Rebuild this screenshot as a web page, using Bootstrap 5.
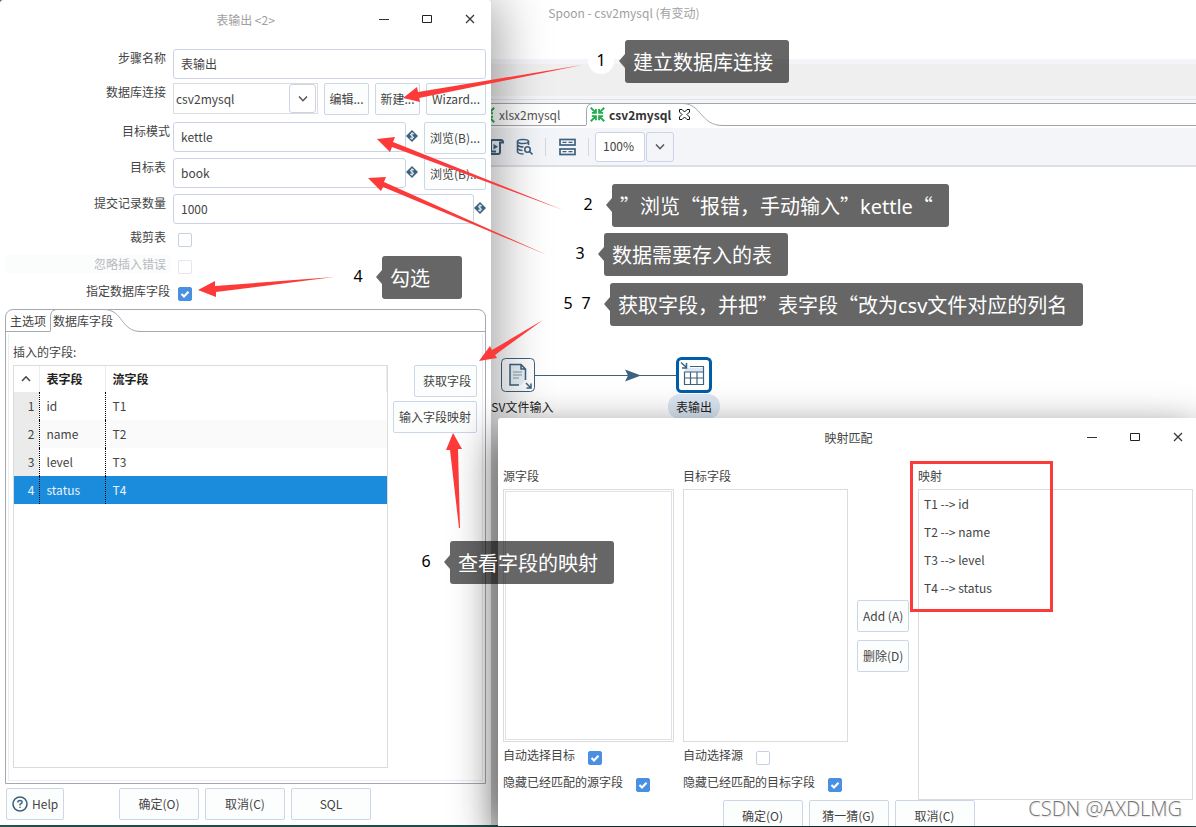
<!DOCTYPE html>
<html lang="zh-CN">
<head>
<meta charset="utf-8">
<meta name="viewport" content="width=device-width, initial-scale=1">
<title>Spoon - csv2mysql</title>
<link rel="stylesheet" href="https://cdn.jsdelivr.net/npm/bootstrap@5.3.0/dist/css/bootstrap.min.css">
<style>
  body { font-family: "Noto Sans CJK SC", sans-serif; font-size: 12px; line-height: 18px; color: #444; background: #2b5b58; }
  .desktop { height: 100vh; min-height: 820px; }
  .win { position: absolute; background: #fff; }
  .spoon { left: 52px; right: 0; top: 0; bottom: 2px; }
  .step-win { left: 0; top: 0; bottom: 2px; width: 491px; border-radius: 3px 3px 0 0; box-shadow: 8px 0 50px rgba(0,0,0,.36); }
  .map-win { left: 498px; right: -3px; top: 418px; bottom: 1px; border-radius: 3px 3px 0 0; box-shadow: 0 16px 44px rgba(0,0,0,.7); }

  /* title bars */
  .titlebar { height: 40px; }
  .win-btns { position: absolute; right: 0; top: 0; }
  .win-btn { width: 42px; height: 38px; border: 0; background: none; padding: 0; color: #333; }
  .win-btn svg { display: block; margin: 0 auto; }
  .muted-title { color: #a0a0a0; }

  /* form controls */
  .btn-k { height: 32px; padding: 0 5px; font-size: 12px; line-height: 18px; color: #444; background: #fcfefe; border: 1px solid #ccd6e9; border-radius: 2px; white-space: nowrap; }
  .btn-w { width: 80px; }
  .btn-n { width: 45px; padding: 0 4px; }
  .box { height: 30px; padding: 0 7px 2px; font-size: 12px; color: #444; border: 1px solid #ccd3e8; border-radius: 3px; min-width: 0; }
  .combo select { appearance: none; width: 100%; height: 31px; padding: 0 2px; border: 1px solid #dcdcdc; background: #fff; color: #444; line-height: 18px; }
  .combo span { position: absolute; right: 2px; top: 1px; width: 27px; height: 29px; border: 1px solid #ccd3e8; border-radius: 3px; background: #fff; pointer-events: none; }
  .chk { appearance: none; flex: none; width: 14px; height: 14px; margin: 0; border: 1px solid #c5d0e6; border-radius: 2px; background: #fff; }
  .chk:checked { border-color: #4a90e2; background: #4a90e2 url("data:image/svg+xml,%3Csvg xmlns='http://www.w3.org/2000/svg' viewBox='0 0 12 12'%3E%3Cpath d='M2.5 6l2.5 2.5 4.500-4.700' fill='none' stroke='%23fff' stroke-width='2.200'/%3E%3C/svg%3E") center / 12px 12px no-repeat; }
  .chk:disabled { border-color: #e3e5f0; }
  .form-line { display: grid; grid-template-columns: 165px 1fr; column-gap: 3px; align-items: start; }
  .form-line > label { text-align: right; }
  .line-field { height: 36px; }
  .line-check { height: 27px; }
  .line-check .chk { margin: 5px 0 0 5px; }
  .off { color: #b9b9c0; background: #fbfdfc; }
  .var-mark { flex: none; width: 12px; height: 12px; margin-top: 8px; }

  /* tab folder in the step dialog */
  .folder { margin: 0 5px; border: 1px solid #a3a8b3; border-radius: 8px 8px 0 0; min-height: 0; }
  .folder-tabs { height: 22px; border-bottom: 1px solid #a3a8b3; }
  .tab-k { position: relative; height: 22px; border: 0; background: none; padding: 0 3px; color: #444; }
  .tab-k svg { position: absolute; left: 0; top: -1px; }
  .tab-k span { position: relative; }
  .folder-body { margin: 2px; border: 1px solid #ececee; border-top: 0; padding: 9px 5px 12px 4px; min-height: 0; }
  .sheet { border: 1px solid #dcdcdc; }
  .fields { color: #444; table-layout: fixed; }
  .fields th, .fields td { height: 28px; padding: 0 7px; line-height: 18px; border: 0; vertical-align: middle; }
  .fields thead th { height: 26px; color: #222; border-right: 1px solid #ececec; background: #fff; }
  .fields thead svg { display: block; margin: 0 auto; }
  .fields tbody td:not(:last-child), .fields tbody th { border-right: 1px dotted #000; }
  .fields tbody th { background: #ebebeb; font-weight: 400; text-align: right; padding: 0 4px; color: #444; }
  .fields tbody tr:nth-child(2) td { background: #fafafa; }
  .fields tbody tr:nth-child(4) > * { background: #1b8cdb; color: #e8f3fb; }
  .foot { display: grid; grid-template-columns: 1fr auto 1fr; padding: 4px 7px 5px 6px; }

  /* main window */
  .spoon-title { height: 59px; padding-top: 4px; }
  .band { height: 45px; background: #efefef; border: solid #f4f5f8; border-width: 5px 0 8px; }
  .band-line { height: 1px; margin-top: -5px; margin-bottom: 3px; background: #dfe1e4; }
  .sheet-tabs { height: 23px; border-top: 1px solid #a5a5ac; border-bottom: 1px solid #a5a5ac; padding-left: 427px; }
  .sheet-tab { position: relative; height: 21px; border: 0; background: none; padding: 0; color: #555; }
  .sheet-tab.first { width: 107px; gap: 4px; }
  .sheet-tab.current { width: 134px; color: #333; }
  .sheet-tab .edge { position: absolute; left: 0; top: -1px; }
  .sheet-tab > *:not(.edge) { position: relative; }
  .tools { height: 39px; margin-top: 2px; padding-left: 435px; background: #f4f5f8; border-bottom: 2px solid #dcdee2; }
  .tool { border: 0; background: none; padding: 0; width: 17px; height: 18px; line-height: 0; margin-right: 12px; }
  .sep { width: 1px; height: 18px; background: #d6d8dc; margin-right: 13px; }
  .zoom-box { width: 50px; margin: 0 1px 0 -7px; }

  /* transformation graph */
  .node { position: absolute; }
  .node-label { border-radius: 12px; padding: 4px 8px 3px; color: #222; line-height: 18px; }
  .node-label.picked { background: #dae6f2; }

  /* mapping dialog */
  .map-grid { display: grid; grid-template-columns: 171fr 165fr 52px 275fr; column-gap: 9px; padding: 9px 6px 0 5px; min-height: 0; }
  .map-grid .cap { height: 22px; }
  .focus-list { border: 1px solid #dcdcdc; padding: 1px; }
  .focus-list > div { border: 1px solid #e0e0ea; height: 100%; }
  .opt { height: 27px; display: flex; gap: 13px; padding-top: 4px; }
  .opt .chk { margin-top: 5px; }
  .pairs li { height: 28px; padding: 5px; }
  .map-foot { height: 26px; overflow: hidden; }

  /* notes drawn over the desktop */
  .notes { position: absolute; inset: 0; pointer-events: none; overflow: hidden; }
  .note { position: absolute; height: 43px; padding: 0 16px 0 8px; border-radius: 3px; background: rgba(0,0,0,.6); color: #fff; font: 20px/44px "Noto Sans CJK SC", sans-serif; white-space: nowrap; }
  .note i { font-family: "Noto Sans", sans-serif; font-style: normal; }
  .note::before { content: ""; position: absolute; left: -6px; top: 14px; border: 7px solid transparent; border-right: 6px solid #666; border-left: 0; }
  .note b { position: absolute; left: -37px; top: 8px; width: 26px; height: 26px; border-radius: 50%; background: #fff; color: #000; font: 16px/24px "Noto Sans", sans-serif; text-align: center; }
  .note b.second { left: -55px; }
  .frame { position: absolute; left: 910px; top: 461px; width: 143px; height: 151px; border: 3px solid #fd3a3a; }
  .stamp { position: absolute; right: 14px; bottom: 4px; font: 300 20px/28px "Open Sans", "Noto Sans", sans-serif; color: #777; text-shadow: -1px -1px 0 #fff, 1px 1px 1px #ddd; }
</style>
</head>
<body>
<div class="desktop position-relative overflow-hidden">

  <!-- main window -->
  <main class="win spoon d-flex flex-column">
    <div class="spoon-title text-center muted-title">Spoon - csv2mysql (有变动)</div>
    <div class="band"></div>
    <div class="band-line"></div>
    <div class="sheet-tabs d-flex">
      <button class="sheet-tab first d-flex align-items-center" type="button">
        <svg width="16" height="16" viewBox="0 0 16 16"><use href="#shrink"/></svg><span>xlsx2mysql</span>
      </button>
      <button class="sheet-tab current d-flex align-items-center" type="button">
        <svg class="edge" width="138" height="24" viewBox="0 0 138 24"><path d="M0 24V8Q.5.5 7 .5H97C116 1 114 22.500 136 22.500V24z" fill="#fff"/><path d="M.5 22V8Q.5.5 7 .5H97C116 1 114 22.500 137 22.500" fill="none" stroke="#a3a8b3"/></svg>
        <svg class="ms-1" width="15" height="15" viewBox="0 0 16 16"><g id="shrink" fill="none" stroke="#1fae4b" stroke-width="2"><path d="M.8.8l5 5M6.300 2v4.300H2M15.200.8l-5 5M9.700 2v4.300H14M.8 15.200l5-5M6.300 14V9.700H2M15.200 15.200l-5-5M9.700 14V9.700H14"/></g></svg>
        <b class="ms-1">csv2mysql</b>
        <svg class="ms-2" width="11" height="11" viewBox="0 0 11 11" fill="none" stroke="#111"><path d="M.5.5h2.500L5.500 3 8 .5h2.500V3L8 5.500 10.500 8v2.500H8L5.500 8 3 10.500H.5V8L3 5.500.5 3z"/></svg>
      </button>
    </div>
    <div class="tools d-flex align-items-center">
      <button class="tool" type="button" aria-label="运行脚本"><svg width="17" height="18" viewBox="0 0 17 18" fill="none" stroke="#3d627f" stroke-width="2"><path d="M4 13V3.500Q4 2 5.500 2H14q2 0 2 2.500H13V14q0 2-2 2H2q-2 0-1-2.500h8"/><path d="M6.500 6v5.500L11 8.700z" fill="#3d627f" stroke="none"/></svg></button>
      <button class="tool" type="button" aria-label="探测数据库"><svg width="17" height="18" viewBox="0 0 17 18" fill="none" stroke="#3d627f" stroke-width="1.600"><ellipse cx="7" cy="3.500" rx="5.500" ry="2"/><path d="M1.500 3.500v10.500q1 2 6 2M12.500 3.500V7M1.500 7q1.500 2 6 2M1.500 10.500q1.500 2 5 2"/><circle cx="11.500" cy="11.500" r="2.700"/><path d="M13.500 13.500l3 3"/></svg></button>
      <span class="sep"></span>
      <button class="tool" type="button" aria-label="显示结果"><svg width="17" height="18" viewBox="0 0 17 18" fill="none" stroke="#3d627f" stroke-width="1.700"><rect x="1" y="1.500" width="15" height="5.500"/><rect x="1" y="11" width="15" height="5.500"/><path d="M3.500 4.300h4M9.500 4.300h4M3.500 13.700h4M9.500 13.700h4" stroke-width="1.200"/></svg></button>
      <span class="sep"></span>
      <input class="box zoom-box" value="100%" aria-label="缩放比例">
      <button class="box bg-transparent" type="button" aria-label="选择比例"><svg width="12" height="8" viewBox="0 0 12 8" fill="none" stroke="#555" stroke-width="1.500"><path d="M2 1.500l4 4.200 4-4.200"/></svg></button>
    </div>
    <div class="flex-grow-1"></div>

    <svg class="node" style="left:483px;top:367px" width="142" height="16" viewBox="0 0 142 16"><path d="M0 8.500H142" stroke="#3d627f"/><path d="M90 2.500L106 8.500 90 14.500l3-6z" fill="#3d627f"/></svg>
    <svg class="node" style="left:449px;top:358px" width="34" height="35" viewBox="0 0 34 35" fill="none" stroke="#3d627f"><rect x=".5" y=".5" width="33" height="33" rx="4" fill="#fff"/><path d="M20 6.500H9v20.500h11l4-4V11z" fill="#e9f1f7" stroke="none"/><path d="M18 27H9V6.500h11l4.500 4.500v11M20 6.500V11h4.500" stroke-width="1.500"/><path d="M12 14h9M12 17h9M12 20h6" stroke="#7f9bb0"/><path d="M25 25l5 5M30 25.500V30h-4.500" stroke-width="1.500"/></svg>
    <div class="node node-label" style="left:424px;top:394px">CSV文件输入</div>
    <svg class="node" style="left:624px;top:357px" width="36" height="36" viewBox="0 0 36 36" fill="none" stroke="#3d627f"><rect x="1.500" y="1.500" width="33" height="33" rx="4" fill="#fff" stroke="#005da8" stroke-width="3"/><path d="M9 11h18v4H9z" fill="#dbe7f2" stroke="none"/><path d="M14 9.500h13.500v18h-19V15h19M14.500 15v12.500M21 15v12.500M8.500 21h19" stroke-width="1.200"/><path d="M5 5.500l5.500 5M10.500 6v5H6" stroke-width="1.500"/></svg>
    <div class="node node-label picked" style="left:616px;top:394px">表输出</div>
  </main>

  <!-- step dialog -->
  <section class="win step-win d-flex flex-column">
    <header class="titlebar d-flex align-items-center justify-content-center muted-title">
      <span>表输出 &lt;2&gt;</span>
      <div class="win-btns d-flex" style="gap:1px">
        <button class="win-btn" type="button" aria-label="最小化"><svg width="12" height="12" viewBox="0 0 12 12"><path d="M1 6.500h10" stroke="#333"/></svg></button>
        <button class="win-btn" type="button" aria-label="最大化"><svg width="12" height="12" viewBox="0 0 12 12"><path d="M1.500 2.500h9v7h-9z" fill="none" stroke="#222"/></svg></button>
        <button class="win-btn" type="button" aria-label="关闭"><svg width="12" height="12" viewBox="0 0 12 12"><path d="M2 2l8 8M10 2l-8 8" stroke="#333" stroke-width="1.200"/></svg></button>
      </div>
    </header>
    <form style="margin:9px 5px 0">
      <div class="form-line" style="height:34px"><label class="pe-1" for="f1">步骤名称</label><input class="box" id="f1" value="表输出"></div>
      <div class="form-line" style="height:39px"><label class="pe-1" for="f2">数据库连接</label>
        <div class="d-flex" style="gap:6px">
          <div class="combo position-relative flex-grow-1"><select id="f2"><option>csv2mysql</option></select><span class="d-flex align-items-center justify-content-center"><svg width="12" height="8" viewBox="0 0 12 8" fill="none" stroke="#555" stroke-width="1.500"><path d="M2 1.500l4 4.200 4-4.200"/></svg></span></div>
          <button class="btn-k btn-n" type="button">编辑...</button>
          <button class="btn-k btn-n" type="button">新建...</button>
          <button class="btn-k" type="button">Wizard...</button>
        </div>
      </div>
      <div class="form-line line-field"><label for="f3">目标模式</label>
        <div class="d-flex"><input class="box flex-grow-1" id="f3" value="kettle"><svg class="var-mark" viewBox="0 0 12 12"><g id="dollar"><path d="M6 0l6 6-6 6-6-6z" fill="#3d627f"/><path d="M8 4Q6 2.800 4.800 4T6 6t1.200 2T4 8M6 2.300v7.400" fill="none" stroke="#fff" stroke-width=".9"/></g></svg><button class="btn-k" style="margin-left:6px" type="button">浏览(B)...</button></div>
      </div>
      <div class="form-line line-field"><label class="pe-1" for="f4">目标表</label>
        <div class="d-flex"><input class="box flex-grow-1" id="f4" value="book"><svg class="var-mark" viewBox="0 0 12 12"><use href="#dollar"/></svg><button class="btn-k" style="margin-left:6px" type="button">浏览(B)...</button></div>
      </div>
      <div class="form-line" style="height:34px"><label class="pe-1" for="f5">提交记录数量</label>
        <div class="d-flex"><input class="box flex-grow-1" id="f5" value="1000"><svg class="var-mark" viewBox="0 0 12 12"><use href="#dollar"/></svg></div>
      </div>
      <div class="form-line line-check"><label class="pe-1" for="f6">裁剪表</label><input class="chk" id="f6" type="checkbox"></div>
      <div class="form-line line-check"><label class="pe-1 off" for="f7">忽略插入错误</label><input class="chk" id="f7" type="checkbox" disabled></div>
      <div class="form-line line-check"><label for="f8">指定数据库字段</label><input class="chk" id="f8" type="checkbox" checked></div>
    </form>

    <div class="folder d-flex flex-column flex-grow-1">
      <div class="folder-tabs d-flex">
        <button class="tab-k" type="button" style="width:44px">主选项</button>
        <button class="tab-k" type="button"><svg width="92" height="24" viewBox="0 0 92 24"><path d="M0 24V8Q.5.5 7 .5H54C74 1 70 22.500 90 22.500V24z" fill="#fff"/><path d="M.5 22.500V8Q.5.5 7 .5H54C74 1 70 22.500 91 22.500" fill="none" stroke="#a3a8b3"/></svg><span>数据库字段</span></button>
      </div>
      <div class="folder-body d-flex flex-column flex-grow-1">
        <div style="height:22px">插入的字段:</div>
        <div class="d-flex flex-grow-1 align-items-stretch" style="gap:5px">
          <div class="sheet flex-grow-1">
            <table class="fields table-borderless w-100 mb-0">
              <colgroup><col style="width:25px"><col style="width:66px"><col></colgroup>
              <thead><tr><th class="p-0"><svg width="12" height="8" viewBox="0 0 12 8" fill="none" stroke="#444" stroke-width="1.500"><path d="M2 6l4-4.200L10 6"/></svg></th><th>表字段</th><th>流字段</th></tr></thead>
              <tbody>
                <tr><th>1</th><td>id</td><td>T1</td></tr>
                <tr><th>2</th><td>name</td><td>T2</td></tr>
                <tr><th>3</th><td>level</td><td>T3</td></tr>
                <tr><th>4</th><td>status</td><td>T4</td></tr>
              </tbody>
            </table>
          </div>
          <div class="d-flex flex-column align-items-end gap-1">
            <button class="btn-k text-end" type="button" style="width:63px">获取字段</button>
            <button class="btn-k" type="button">输入字段映射</button>
          </div>
        </div>
      </div>
    </div>
    <footer class="foot">
      <div><button class="btn-k d-inline-flex align-items-center gap-1" type="button"><svg width="16" height="16" viewBox="0 0 16 16" fill="none" stroke="#3d627f"><circle cx="8" cy="8" r="7" stroke-width="1.600"/><path d="M5.800 6.500Q5.800 4.500 8 4.500T10.200 6.300Q10.200 7.300 8 8.300V9.500M8 10.700V12" stroke-width="1.400"/></svg>Help</button></div>
      <div class="d-flex" style="gap:6px">
        <button class="btn-k btn-w" type="button">确定(O)</button>
        <button class="btn-k btn-w" type="button">取消(C)</button>
        <button class="btn-k btn-w" type="button">SQL</button>
      </div>
    </footer>
  </section>

  <!-- mapping dialog -->
  <section class="win map-win d-flex flex-column">
    <header class="titlebar d-flex align-items-center justify-content-center">
      <span>映射匹配</span>
      <div class="win-btns d-flex" style="gap:1px">
        <button class="win-btn" type="button" aria-label="最小化"><svg width="12" height="12" viewBox="0 0 12 12"><path d="M1 6.500h10" stroke="#333"/></svg></button>
        <button class="win-btn" type="button" aria-label="最大化"><svg width="12" height="12" viewBox="0 0 12 12"><path d="M1.500 2.500h9v7h-9z" fill="none" stroke="#222"/></svg></button>
        <button class="win-btn" type="button" aria-label="关闭"><svg width="12" height="12" viewBox="0 0 12 12"><path d="M2 2l8 8M10 2l-8 8" stroke="#333" stroke-width="1.200"/></svg></button>
      </div>
    </header>
    <div class="map-grid flex-grow-1">
      <div class="d-flex flex-column">
        <div class="cap">源字段</div>
        <div class="focus-list flex-grow-1"><div></div></div>
        <div class="opt"><label for="m1">自动选择目标</label><input class="chk" id="m1" type="checkbox" checked></div>
        <div class="opt mb-1"><label for="m2">隐藏已经匹配的源字段</label><input class="chk" id="m2" type="checkbox" checked></div>
      </div>
      <div class="d-flex flex-column">
        <div class="cap">目标字段</div>
        <div class="sheet flex-grow-1"></div>
        <div class="opt"><label for="m3">自动选择源</label><input class="chk" id="m3" type="checkbox"></div>
        <div class="opt mb-1 text-nowrap"><label for="m4">隐藏已经匹配的目标字段</label><input class="chk" id="m4" type="checkbox" checked></div>
      </div>
      <div class="d-flex flex-column justify-content-center gap-2 pt-1">
        <button class="btn-k" type="button">Add (A)</button>
        <button class="btn-k" type="button">删除(D)</button>
      </div>
      <div class="d-flex flex-column">
        <div class="cap">映射</div>
        <ul class="sheet pairs list-unstyled flex-grow-1 mb-0">
          <li>T1 --&gt; id</li><li>T2 --&gt; name</li><li>T3 --&gt; level</li><li>T4 --&gt; status</li>
        </ul>
      </div>
    </div>
    <footer class="map-foot d-flex justify-content-center" style="gap:6px">
      <button class="btn-k btn-w" type="button">确定(O)</button>
      <button class="btn-k btn-w" type="button">猜一猜(G)</button>
      <button class="btn-k btn-w" type="button">取消(C)</button>
    </footer>
  </section>

  <!-- numbered notes and arrows -->
  <div class="notes">
    <div class="note" style="left:625px;top:40px"><b>1</b>建立数据库连接</div>
    <div class="note" style="left:612px;top:184px"><b>2</b>”浏览“报错，手动输入”<i>kettle</i>“</div>
    <div class="note" style="left:604px;top:233px"><b>3</b>数据需要存入的表</div>
    <div class="note" style="left:610px;top:283px"><b class="second">5</b><b>7</b>获取字段，并把”表字段“改为<i>csv</i>文件对应的列名</div>
    <div class="note" style="left:382px;top:256px;width:80px"><b>4</b>勾选</div>
    <div class="note" style="left:450px;top:541px"><b>6</b>查看字段的映射</div>
    <svg class="position-absolute top-0 start-0" width="620" height="540" viewBox="0 0 620 540" fill="#fd3a3a">
      <path d="M403 98l14-11 1 5L582 65 419 98l1 4z"/>
      <path d="M377 139l18-2-2 5L563 210 392 147l-2 5z"/>
      <path d="M368 178l18-1-2 5L547 255 383 187l-2 4z"/>
      <path d="M198 290l17-9v5L334 277 216 292v5z"/>
      <path d="M479 361l11-15 2 4L543 320 495 355l2 3z"/>
      <path d="M453 433l9 16h-4L460 528h-1L450 450h-4z"/>
    </svg>
    <div class="frame"></div>
    <div class="stamp">CSDN @AXDLMG</div>
  </div>
</div>
<script src="https://cdn.jsdelivr.net/npm/bootstrap@5.3.0/dist/js/bootstrap.bundle.min.js"></script>
</body>
</html>
